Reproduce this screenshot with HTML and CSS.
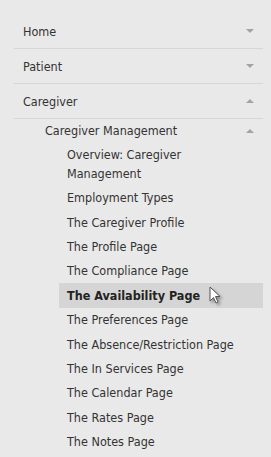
FILE: index.html
```html
<!DOCTYPE html>
<html lang="en">
<head>
	<meta charset="UTF-8">
	<title>Help Menu</title>
	<link rel="stylesheet" href="styles.css">
</head>
<body>
	<div class="menu">
		<div class="top"><span>Home</span><i class="arr down"></i></div>
		<div class="top"><span>Patient</span><i class="arr down"></i></div>
		<div class="top"><span>Caregiver</span><i class="arr up"></i></div>

		<div class="sub"><span>Caregiver Management</span><i class="arr up"></i></div>
		<ul class="pages">
			<li>Overview: Caregiver<br>Management</li>
			<li>Employment Types</li>
			<li>The Caregiver Profile</li>
			<li>The Profile Page</li>
			<li>The Compliance Page</li>
			<li class="active">The Availability Page
				<svg class="cursor" width="13" height="19" viewBox="0 0 13 19"><path d="M1 1 L1 15 L4.5 11.5 L7 17 L9 16 L6.5 10.5 L11 10.5 Z" fill="#fff" stroke="#555" stroke-width="1"/></svg>
			</li>
			<li>The Preferences Page</li>
			<li>The Absence/Restriction Page</li>
			<li>The In Services Page</li>
			<li>The Calendar Page</li>
			<li>The Rates Page</li>
			<li>The Notes Page</li>
		</ul>
	</div>
</body>
</html>
```

FILE: styles.css
```css
body,ul{ margin: 0; padding: 0; }
li{ list-style: none; }
body{ background: #e9e9e9; font-family: "DejaVu Sans Condensed", "DejaVu Sans", sans-serif; font-size: 12.5px; color: #333; }

.menu{ width: 249px; margin-left: 14px; padding-top: 14px; }
.menu .top{ height: 34px; border-bottom: 1px solid #d6d6d6; display: flex; align-items: center; justify-content: space-between; padding: 0 9px; }
.menu .sub{ height: 23px; display: flex; align-items: center; justify-content: space-between; padding: 0 9px 0 31px; }

.arr{ width: 0; height: 0; border-left: 4px solid transparent; border-right: 4px solid transparent; }
.arr.down{ border-top: 4px solid #a3a3a3; }
.arr.up{ border-bottom: 4px solid #a3a3a3; }

.pages{ padding-left: 45px; }
.pages li{ padding: 2.6px 8px; line-height: 19.2px; position: relative; }
.pages .active{ background: #d5d5d5; font-weight: bold; color: #222; }
.cursor{ position: absolute; left: 150px; top: 3px; filter: drop-shadow(2px 2px 1.5px rgba(0,0,0,0.35)); }
```
